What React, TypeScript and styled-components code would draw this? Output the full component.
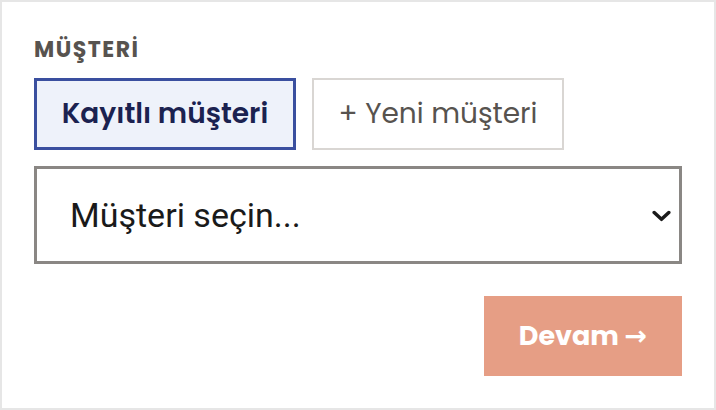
import React, { useState } from "react";
import styled, { createGlobalStyle } from "styled-components";

const GlobalStyle = createGlobalStyle`
  html, body {
    margin: 0;
    padding: 0;
    background: #ffffff;
  }
  * {
    box-sizing: border-box;
  }
`;

const FONT = `"Poppins", "Open Sans", "Liberation Sans", sans-serif`;

const Card = styled.div`
  width: 716px;
  height: 410px;
  border: 2px solid #e6e6e6;
  background: #ffffff;
  padding: 33px 32px 32px;
  display: flex;
  flex-direction: column;
  font-family: ${FONT};
`;

const Label = styled.div`
  font-size: 22px;
  line-height: 30px;
  font-weight: 700;
  letter-spacing: 1.5px;
  color: #57534f;
  margin-bottom: 13px;
`;

const Tabs = styled.div`
  display: flex;
  gap: 16px;
  margin-bottom: 16px;
`;

const Tab = styled.button<{ active?: boolean; w: number }>`
  width: ${(p) => p.w}px;
  height: 72px;
  padding: 0;
  font-family: ${FONT};
  font-size: 28px;
  font-weight: ${(p) => (p.active ? 600 : 400)};
  color: ${(p) => (p.active ? "#1b2250" : "#57534f")};
  background: ${(p) => (p.active ? "#eef2fa" : "#ffffff")};
  border: ${(p) => (p.active ? "3px solid #3a4f9f" : "2px solid #d9d6d3")};
  cursor: pointer;
`;

const SelectWrap = styled.div`
  position: relative;
  width: 648px;
  height: 98px;
  margin-bottom: 32px;
`;

const Select = styled.select`
  appearance: none;
  -webkit-appearance: none;
  width: 100%;
  height: 100%;
  border: 3px solid #8a8784;
  border-radius: 0;
  background: #ffffff;
  padding: 0 60px 0 33px;
  font-family: Roboto, "Liberation Sans", sans-serif;
  font-size: 34px;
  color: #1a1a1a;
  outline: none;
`;

const Chevron = styled.svg`
  position: absolute;
  right: 11px;
  top: 44px;
  width: 19px;
  height: 12px;
  pointer-events: none;
`;

const Footer = styled.div`
  display: flex;
  justify-content: flex-end;
`;

const Continue = styled.button`
  width: 198px;
  height: 80px;
  border: none;
  background: #e69e85;
  color: #ffffff;
  font-family: ${FONT};
  font-size: 27px;
  font-weight: 700;
  cursor: pointer;
`;

const Arrow = styled.span`
  font-family: "DejaVu Sans", sans-serif;
  font-weight: 700;
  font-size: 27px;
`;

export default function App() {
  const [mode, setMode] = useState<"saved" | "new">("saved");

  return (
    <>
      <GlobalStyle />
      <Card>
        <Label>MÜŞTERİ</Label>
        <Tabs>
          <Tab w={262} active={mode === "saved"} onClick={() => setMode("saved")}>
            Kayıtlı müşteri
          </Tab>
          <Tab w={252} active={mode === "new"} onClick={() => setMode("new")}>
            + Yeni müşteri
          </Tab>
        </Tabs>
        <SelectWrap>
          <Select defaultValue="">
            <option value="">Müşteri seçin...</option>
          </Select>
          <Chevron viewBox="0 0 19 12">
            <path
              d="M2.2 2.5 L9.5 9.3 L16.8 2.5"
              fill="none"
              stroke="#1a1a1a"
              strokeWidth="3.5"
              strokeLinecap="round"
              strokeLinejoin="round"
            />
          </Chevron>
        </SelectWrap>
        <Footer>
          <Continue>
            Devam <Arrow>→</Arrow>
          </Continue>
        </Footer>
      </Card>
    </>
  );
}
